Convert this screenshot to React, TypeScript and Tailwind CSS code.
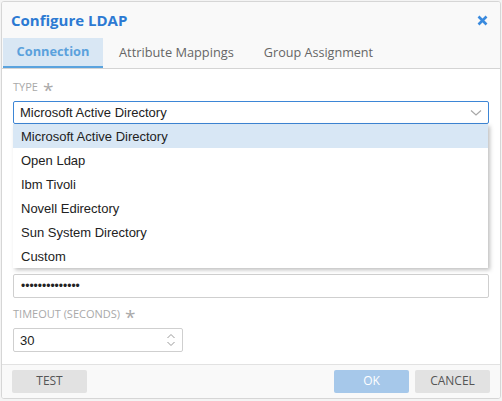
import React from "react";

const items = [
  "Microsoft Active Directory",
  "Open Ldap",
  "Ibm Tivoli",
  "Novell Edirectory",
  "Sun System Directory",
  "Custom",
];

export default function App() {
  return (
    <div className="w-[502px] h-[401px] bg-[#f4f4f4] pt-px pl-px">
      <div
        className="w-[500px] h-[398px] bg-white border border-[#d6d6d6] rounded-[3px] flex flex-col overflow-hidden"
        style={{ fontFamily: '"Open Sans", "Liberation Sans", sans-serif' }}
      >
        {/* header */}
        <div className="bg-[#f9f9f9] border-b border-[#d4d4d4]">
          <div className="h-[36px] flex items-center justify-between pl-[9px] pr-[12px]">
            <span className="text-[15px] font-bold text-[#2c7ad3] leading-none">Configure LDAP</span>
            <svg width="11" height="11" viewBox="0 0 11 11">
              <path d="M1.5 1.5 L9.5 9.5 M9.5 1.5 L1.5 9.5" stroke="#3a8ade" strokeWidth="2.6" strokeLinecap="butt" />
            </svg>
          </div>
          <div className="flex h-[30px] pl-px">
            <div className="w-[100px] h-full bg-[#d9e7f4] border-b-2 border-[#5aa3de] flex items-center justify-center text-[12.8px] font-bold text-[#5ba1dc]">
              Connection
            </div>
            <div className="h-full pl-[16px] pr-[15px] flex items-center text-[12.8px] text-[#666]">Attribute Mappings</div>
            <div className="h-full px-[15px] flex items-center text-[12.6px] text-[#666]">Group Assignment</div>
          </div>
        </div>

        {/* body */}
        <div className="flex-1 px-[11px] pt-[11px] relative">
          <div className="text-[11px] text-[#a9a9a9] leading-[14px] h-[14px] flex items-center gap-[5px]">
            TYPE <span className="text-[19px] leading-none text-[#a9a9a9] mt-[6px]">*</span>
          </div>
          <div className="mt-[7px] h-[23px] border border-[#3d86d6] rounded-[2px] flex items-center justify-between pl-[6px] pr-[6px]">
            <span className="text-[13px] text-[#222] pt-px" style={{ fontFamily: '"Liberation Sans", Arial, sans-serif' }}>
              Microsoft Active Directory
            </span>
            <svg width="12" height="8" viewBox="0 0 12 8">
              <path d="M1 1.5 L6 6 L11 1.5" stroke="#a8a8a8" strokeWidth="1.2" fill="none" />
            </svg>
          </div>

          {/* dropdown list */}
          <div
            className="absolute left-[11px] top-[55px] w-[475px] bg-white shadow-[2px_2px_4px_rgba(0,0,0,0.25)] z-10"
            style={{ fontFamily: '"Liberation Sans", Arial, sans-serif' }}
          >
            {items.map((it, i) => (
              <div
                key={it}
                className={`h-[24px] flex items-center pl-[8px] pt-px text-[13px] text-[#222] ${i === 0 ? "bg-[#d8e7f5]" : ""}`}
              >
                {it}
              </div>
            ))}
          </div>

          <div className="mt-[150px] h-[24px] border border-[#cfcfcf] rounded-[2px] flex items-center pl-[7px]">
            <span className="text-[12px] text-[#222]" style={{ fontFamily: '"Liberation Sans", Arial, sans-serif' }}>
              ••••••••••••••
            </span>
          </div>

          <div className="mt-[9px] text-[11px] text-[#a9a9a9] leading-[14px] h-[14px] flex items-center gap-[5px]">
            TIMEOUT (SECONDS) <span className="text-[19px] leading-none text-[#a9a9a9] mt-[6px]">*</span>
          </div>
          <div className="mt-[7px] w-[170px] h-[24px] border border-[#cfcfcf] rounded-[2px] flex items-center justify-between pl-[6px] pr-[6px]">
            <span className="text-[13px] text-[#222] pt-px" style={{ fontFamily: '"Liberation Sans", Arial, sans-serif' }}>30</span>
            <svg width="10" height="14" viewBox="0 0 10 14">
              <path d="M1.5 5 L5 1.5 L8.5 5 M1.5 9 L5 12.5 L8.5 9" stroke="#9a9a9a" strokeWidth="1" fill="none" />
            </svg>
          </div>
        </div>

        {/* footer */}
        <div className="h-[34px] bg-[#f9f9f9] border-t border-[#e2e2e2] flex items-center justify-between px-[10px] pb-px">
          <button className="w-[75px] h-[23px] bg-[#e2e2e2] rounded-[2px] text-[12px] text-[#555]">TEST</button>
          <div className="flex gap-[6px]">
            <button className="w-[75px] h-[23px] bg-[#a6c8ea] rounded-[2px] text-[12px] text-white">OK</button>
            <button className="w-[75px] h-[23px] bg-[#e2e2e2] rounded-[2px] text-[12px] text-[#555]">CANCEL</button>
          </div>
        </div>
      </div>
    </div>
  );
}
